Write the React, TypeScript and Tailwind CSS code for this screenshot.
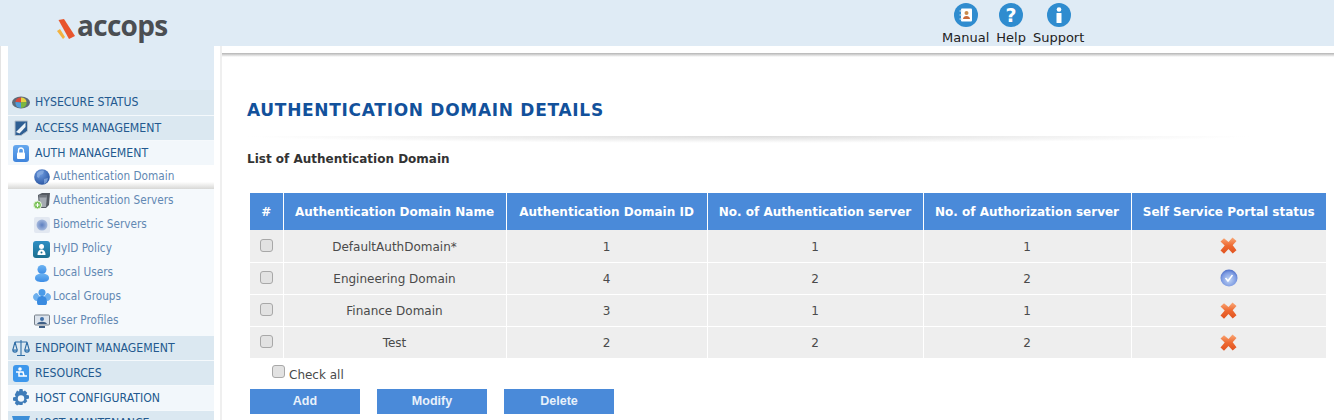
import React from 'react';

const verdana = "font-['DejaVu_Sans',Verdana,sans-serif]";

type IconName = 'status' | 'access' | 'lock' | 'globe' | 'server' | 'bio' | 'hyid' | 'user' | 'group' | 'profile' | 'scale' | 'cart' | 'gear' | 'tools';

const SideIcon = ({ name }: { name: IconName }) => {
  switch (name) {
    case 'status':
      return (
        <svg width="18" height="13" viewBox="0 0 18 13">
          <ellipse cx="9" cy="6.500" rx="9" ry="6" fill="#5d6b78" />
          <path d="M3.500 6a5.500 5 0 0 1 5.500-4.500V6.500z" fill="#d9483b" />
          <path d="M9 1.500A5.500 5 0 0 1 14.500 6L9 6.500z" fill="#e8d33f" />
          <path d="M3.500 6L9 6.500V12a5.500 5 0 0 1-5.500-6z" fill="#4f9bd8" />
          <path d="M14.500 6A5.500 5 0 0 1 9 12V6.500z" fill="#7cb83f" />
        </svg>
      );
    case 'access':
      return (
        <svg width="15" height="16" viewBox="0 0 15 16">
          <path d="M1 1h12.500v10L7 15.500H1z" fill="#2f5f93" stroke="#b4c0cb" />
          <path d="M2 12L11.500 2.500V7L5.500 13.500z" fill="#eef4f8" />
        </svg>
      );
    case 'lock':
      return (
        <svg width="16" height="17" viewBox="0 0 16 17">
          <defs>
            <linearGradient id="lockBg" x1="0" y1="0" x2="0" y2="1">
              <stop offset="0" stopColor="#66a8ee" />
              <stop offset="1" stopColor="#3f84dc" />
            </linearGradient>
          </defs>
          <rect width="16" height="17" rx="3" fill="url(#lockBg)" />
          <path d="M5.500 8V5.500a2.500 2.500 0 0 1 5 0V8" fill="none" stroke="#fff" strokeWidth="1.300" />
          <rect x="4" y="7.500" width="8" height="6.500" rx="1" fill="#fff" />
        </svg>
      );
    case 'globe':
      return (
        <svg width="16" height="18" viewBox="0 0 16 18">
          <defs>
            <radialGradient id="globeBg" cx="0.400" cy="0.300" r="0.800">
              <stop offset="0" stopColor="#6f9ce0" />
              <stop offset="1" stopColor="#234f9c" />
            </radialGradient>
          </defs>
          <circle cx="8" cy="9" r="7.800" fill="url(#globeBg)" />
          <path d="M3 5c2-2 5-3 7-2l-1 3-3 1-1 3-2-1zM10 11l4-1-1 4-3 2z" fill="#8fb1e2" opacity=".7" />
        </svg>
      );
    case 'server':
      return (
        <svg width="18" height="18" viewBox="0 0 18 18">
          <path d="M5 3l4-2h8l-1 12-3 3H6z" fill="#555b63" />
          <path d="M6 3h8l-1 12H7z" fill="#a4aab2" />
          <path d="M6 3h8l-.300 2.500H6.300z" fill="#70767e" />
          <circle cx="4.500" cy="13" r="4" fill="#7cc35b" stroke="#e8f5e0" />
          <path d="M2.500 13h4M4.500 11v4" stroke="#fff" />
        </svg>
      );
    case 'bio':
      return (
        <svg width="16" height="16" viewBox="0 0 16 16">
          <defs>
            <radialGradient id="bioBg">
              <stop offset="0" stopColor="#5c7ec0" />
              <stop offset="1" stopColor="#a5b9dd" />
            </radialGradient>
          </defs>
          <rect width="16" height="16" rx="2" fill="#e2e8f1" />
          <circle cx="8" cy="8" r="5.500" fill="url(#bioBg)" />
        </svg>
      );
    case 'hyid':
      return (
        <svg width="17" height="17" viewBox="0 0 17 17">
          <defs>
            <linearGradient id="hyidBg" x1="0" y1="0" x2="0" y2="1">
              <stop offset="0" stopColor="#2f8fc4" />
              <stop offset="1" stopColor="#1c6f8f" />
            </linearGradient>
          </defs>
          <rect width="17" height="17" rx="3" fill="url(#hyidBg)" />
          <circle cx="8.500" cy="5.500" r="2.500" fill="#fff" />
          <path d="M4.500 14c0-4 2-5.500 4-5.500s4 1.500 4 5.500z" fill="#fff" />
          <circle cx="8.500" cy="11.500" r="1" fill="#1c6f8f" />
        </svg>
      );
    case 'user':
      return (
        <svg width="14" height="17" viewBox="0 0 14 17">
          <defs>
            <linearGradient id="userBg" x1="0" y1="0" x2="0" y2="1">
              <stop offset="0" stopColor="#6db4f2" />
              <stop offset="1" stopColor="#3c8de6" />
            </linearGradient>
          </defs>
          <ellipse cx="7" cy="4.500" rx="4.500" ry="4.500" fill="url(#userBg)" />
          <path d="M0 13c0-3 3-4.500 7-4.500S14 10 14 13s-3 4-7 4-7-1-7-4z" fill="url(#userBg)" />
        </svg>
      );
    case 'group':
      return (
        <svg width="18" height="16" viewBox="0 0 18 16">
          <circle cx="9" cy="3.500" r="3.500" fill="#4a9be8" />
          <path d="M0 8c0-2 2-4 4-4l3 4-3 4C2 12 0 10 0 8zM18 8c0-2-2-4-4-4l-3 4 3 4c2 0 4-2 4-4z" fill="#6db0ee" />
          <path d="M4 13c0-4 2-6 5-6s5 2 5 6-2 3-5 3-5 1-5-3z" fill="#3a8be0" />
        </svg>
      );
    case 'profile':
      return (
        <svg width="16" height="14" viewBox="0 0 16 14">
          <rect x="0.500" y="1" width="15" height="10" rx="1" fill="#dbe3ec" stroke="#77808a" />
          <circle cx="8" cy="5" r="2" fill="#3f6fa8" />
          <path d="M3 10c1-3 9-3 10 0zM5 12h6v2H5z" fill="#3f5f85" />
        </svg>
      );
    case 'scale':
      return (
        <svg width="18" height="18" viewBox="0 0 18 18" fill="none" stroke="#2f6da5" strokeWidth="1.100">
          <path d="M9 1v15M5 16.500h8M3 3h12M3 3L0.800 11M3 3l2.200 8M15 3l-2.200 8M15 3l2.200 8" />
          <path d="M0.800 11a2.200 2.200 0 0 0 4.400 0zM12.800 11a2.200 2.200 0 0 0 4.400 0z" fill="#7fb2dc" />
        </svg>
      );
    case 'cart':
      return (
        <svg width="16" height="17" viewBox="0 0 16 17">
          <rect width="16" height="17" rx="3" fill="#3d97ec" />
          <circle cx="7" cy="4" r="1.800" fill="#fff" />
          <path d="M3 7h7l1 4h3M6 7v4h5M6 14.500h.01M11 14.500h.01" stroke="#fff" strokeWidth="1.500" fill="none" />
        </svg>
      );
    case 'gear':
      return (
        <svg width="18" height="18" viewBox="0 0 18 18">
          <path d="M7.500 0h3l.5 2.500 2-.9 2.200 2.200-1 2 2.800.7v3l-2.800.7 1 2-2.200 2.200-2-1-.5 2.600h-3L7 15.400l-2 1-2.200-2.200 1-2L1 11.500v-3l2.800-.7-1-2L5 1.600l2 .9z" fill="#3f7cb8" />
          <circle cx="9" cy="9.500" r="3.200" fill="#f3f8fc" />
        </svg>
      );
    default:
      return (
        <svg width="18" height="14" viewBox="0 0 18 14">
          <path d="M0 0h18l-3 10H3z" fill="#3d8fd8" />
        </svg>
      );
  }
};

const mainMenuBottom: { label: string; icon: IconName; bg: string }[] = [
  { label: 'ENDPOINT MANAGEMENT', icon: 'scale', bg: 'bg-[#dbe8f1]' },
  { label: 'RESOURCES', icon: 'cart', bg: 'bg-[#dbe8f1]' },
  { label: 'HOST CONFIGURATION', icon: 'gear', bg: 'bg-[#f2f7fb]' },
  { label: 'HOST MAINTENANCE', icon: 'tools', bg: 'bg-[#dbe8f1]' },
];

const subMenu: { label: string; icon: IconName }[] = [
  { label: 'Authentication Domain', icon: 'globe' },
  { label: 'Authentication Servers', icon: 'server' },
  { label: 'Biometric Servers', icon: 'bio' },
  { label: 'HyID Policy', icon: 'hyid' },
  { label: 'Local Users', icon: 'user' },
  { label: 'Local Groups', icon: 'group' },
  { label: 'User Profiles', icon: 'profile' },
];

const MainItem = ({ label, icon, bg, className = 'h-[24px]' }: { label: string; icon: IconName; bg: string; className?: string }) => (
  <div className={`flex shrink-0 items-center mb-px pl-[4px] ${className} ${bg}`}>
    <span className="flex w-[23px] shrink-0 justify-center pr-[5px]">
      <SideIcon name={icon} />
    </span>
    <span className="text-[12.2px] text-[#23598f] whitespace-nowrap">{label}</span>
  </div>
);

const HeaderLink = ({ label, children }: { label: string; children: React.ReactNode }) => (
  <div className="flex flex-col items-center">
    <svg width="24" height="24" viewBox="0 0 24 24">
      <circle cx="12" cy="12" r="12" fill="#2f8ccf" />
      {children}
    </svg>
    <span className={`mt-[3px] text-[13px] leading-[16px] text-[#222] ${verdana}`}>{label}</span>
  </div>
);

const rows = [
  { name: 'DefaultAuthDomain*', id: 1, authn: 1, authz: 1, ok: false },
  { name: 'Engineering Domain', id: 4, authn: 2, authz: 2, ok: true },
  { name: 'Finance Domain', id: 3, authn: 1, authz: 1, ok: false },
  { name: 'Test', id: 2, authn: 2, authz: 2, ok: false },
];

const CrossIcon = ({ id }: { id: string }) => (
  <svg width="17" height="17" viewBox="0 0 17 17" className="mx-auto">
    <defs>
      <linearGradient id={id} x1="0" y1="0" x2="0" y2="1">
        <stop offset="0" stopColor="#f9a877" />
        <stop offset=".5" stopColor="#ee6a32" />
        <stop offset="1" stopColor="#e0521f" />
      </linearGradient>
    </defs>
    <path d="M12.500 0.500l4 3.500-3.800 4.300 3.800 5-3.800 3.200-4.200-4.500L4 16.700l-3.500-3.200 4.200-5L.5 4.500 4 1.300l4.500 3.700z" fill={`url(#${id})`} />
  </svg>
);

const CheckIcon = () => (
  <svg width="18" height="18" viewBox="0 0 18 18" className="mx-auto">
    <defs>
      <radialGradient id="okBg" cx="0.500" cy="0.600" r="0.600">
        <stop offset="0" stopColor="#c3d6f6" />
        <stop offset="0.700" stopColor="#7e9ce2" />
        <stop offset="1" stopColor="#4f6fc8" />
      </radialGradient>
    </defs>
    <circle cx="9" cy="9" r="8.500" fill="url(#okBg)" />
    <path d="M5.500 9l2.500 3 4.500-6" fill="none" stroke="#fff" strokeWidth="1.500" />
  </svg>
);

const Checkbox = () => (
  <input type="checkbox" className="block h-[13px] w-[13px] appearance-none rounded-[3px] border border-[#a8a8a8] bg-[#e2e2e2]" />
);

const App = () => {
  return (
    <div className={`h-[420px] w-[1334px] overflow-hidden bg-white ${verdana}`}>
      <header className="flex h-[46px] items-start bg-[#dfebf5]">
        <div className="ml-[57px] flex w-[885px] items-center pt-[12px]">
          <svg width="19" height="26" viewBox="0 0 19 26">
            <path d="M1.500 7L7 6l11 17-6 3z" fill="#e8552d" />
            <path d="M0 18l3-2 5 8-2 2z" fill="#f3b23f" />
          </svg>
          <span className="ml-[1px] -mt-[2px] font-['Open_Sans',sans-serif] text-[28px] font-bold leading-[30px] tracking-[-0.7px] text-[#4b4e52]">accops</span>
        </div>
        <div className="flex gap-[7px] pt-[3px]">
          <HeaderLink label="Manual">
            <rect x="7" y="5.500" width="11" height="13" rx="1" fill="#fff" />
            <path d="M5.500 8h3M5.500 12h3M5.500 16h3" stroke="#dfe8ee" strokeWidth="1.200" />
            <circle cx="12.500" cy="10" r="2" fill="#c98a4a" />
            <path d="M9 16c0-4 7-4 7 0z" fill="#c96a3a" />
          </HeaderLink>
          <HeaderLink label="Help">
            <text x="12" y="19" textAnchor="middle" fontSize="19" fontWeight="700" fill="#fff" fontFamily="DejaVu Sans">?</text>
          </HeaderLink>
          <HeaderLink label="Support">
            <circle cx="12" cy="6.500" r="2.300" fill="#fff" />
            <rect x="9.500" y="10" width="5" height="10" rx="0.500" fill="#fff" />
          </HeaderLink>
        </div>
      </header>

      <div className="flex h-[374px] border-l border-[#e4e4e4] bg-white">
        <aside className="ml-[7px] w-[206px] shrink-0 bg-[#f5f9fc] font-['DejaVu_Sans_Condensed','DejaVu_Sans',sans-serif]">
          <div className="h-[44px] bg-[#dfebf5]" />
          {/* first row is a px taller, its label stays put */}
          <MainItem label="HYSECURE STATUS" icon="status" bg="bg-[#dbe8f1]" className="h-[25px] pb-px" />
          <MainItem label="ACCESS MANAGEMENT" icon="access" bg="bg-[#dbe8f1]" />
          <MainItem label="AUTH MANAGEMENT" icon="lock" bg="bg-[#f2f7fb]" />
          <div className="mb-[1px] h-[170px] -mt-px">
            {subMenu.map((s, i) => (
              <div
                key={s.label}
                className={`flex h-[24px] items-center pl-[22px] ${i === 0 ? 'bg-gradient-to-b from-white from-70% to-[#d8d8d6]' : ''}`}
              >
                <span className="flex w-[23px] shrink-0 justify-center">
                  <SideIcon name={s.icon} />
                </span>
                <span className="text-[11.7px] text-[#6288b3] whitespace-nowrap">{s.label}</span>
              </div>
            ))}
          </div>
          {mainMenuBottom.map((m) => (
            <MainItem key={m.label} {...m} />
          ))}
        </aside>

        <main className="ml-[6px] min-w-0 flex-1 border-l-2 border-[#efefef] pt-[7px]">
          <div className="h-[4px] bg-gradient-to-b from-[#b4b4b4] to-white" />
          <div className="pl-[25px] pr-[8px]">
            <h1 className="pt-[43px] text-[17px] font-bold leading-[20px] tracking-[0.7px] text-[#12519b]">AUTHENTICATION DOMAIN DETAILS</h1>
            <div className="mt-[16px] h-[7px] w-[1003px] bg-[radial-gradient(50%_100%_at_50%_0%,#dcdcdc,#ffffff)]" />
            <p className="mt-[8px] text-[12px] font-bold leading-[16px] text-[#333]">List of Authentication Domain</p>

            <table className="ml-[3px] mt-[26px] w-[1076px] table-fixed border-collapse text-[12px]">
              <colgroup>
                <col className="w-[33px]" />
                <col className="w-[223px]" />
                <col className="w-[201px]" />
                <col className="w-[216px]" />
                <col className="w-[208px]" />
                <col className="w-[195px]" />
              </colgroup>
              <thead>
                <tr className="h-[37px] bg-[#4a8ad9] font-bold text-white">
                  {['#', 'Authentication Domain Name', 'Authentication Domain ID', 'No. of Authentication server', 'No. of Authorization server', 'Self Service Portal status'].map((h) => (
                    <th key={h} className="border-r border-white p-0 text-center text-[12px] font-bold whitespace-nowrap last:border-r-0">{h}</th>
                  ))}
                </tr>
              </thead>
              <tbody>
                {rows.map((r) => (
                  <tr key={r.name} className="h-[32px] border-b border-white bg-[#eeeeee] text-[#4a4a4a]">
                    <td className="border-r border-white pl-[10px] pb-[1px] align-middle"><Checkbox /></td>
                    <td className="border-r border-white pt-[2px] text-center">{r.name}</td>
                    <td className="border-r border-white pt-[2px] text-center">{r.id}</td>
                    <td className="border-r border-white pt-[2px] text-center">{r.authn}</td>
                    <td className="border-r border-white pt-[2px] text-center">{r.authz}</td>
                    <td className="text-center">{r.ok ? <CheckIcon /> : <CrossIcon id={`cross${r.id}`} />}</td>
                  </tr>
                ))}
              </tbody>
            </table>

            <label className="ml-[25px] mt-[6px] flex h-[20px] items-start text-[12px] text-[#4a4a4a]">
              <span className="mr-[4px]"><Checkbox /></span>
              <span className="mt-[2px] leading-[16px]">Check all</span>
            </label>

            <div className="ml-[3px] mt-[4px] flex gap-[17px]">
              {['Add', 'Modify', 'Delete'].map((b) => (
                <button key={b} className="h-[25px] w-[110px] bg-[#4a8ad9] font-['Liberation_Sans',Arial,sans-serif] text-[12.500px] font-bold text-[#e8f1fb]">{b}</button>
              ))}
            </div>
          </div>
        </main>
      </div>
    </div>
  );
};

export default App;
